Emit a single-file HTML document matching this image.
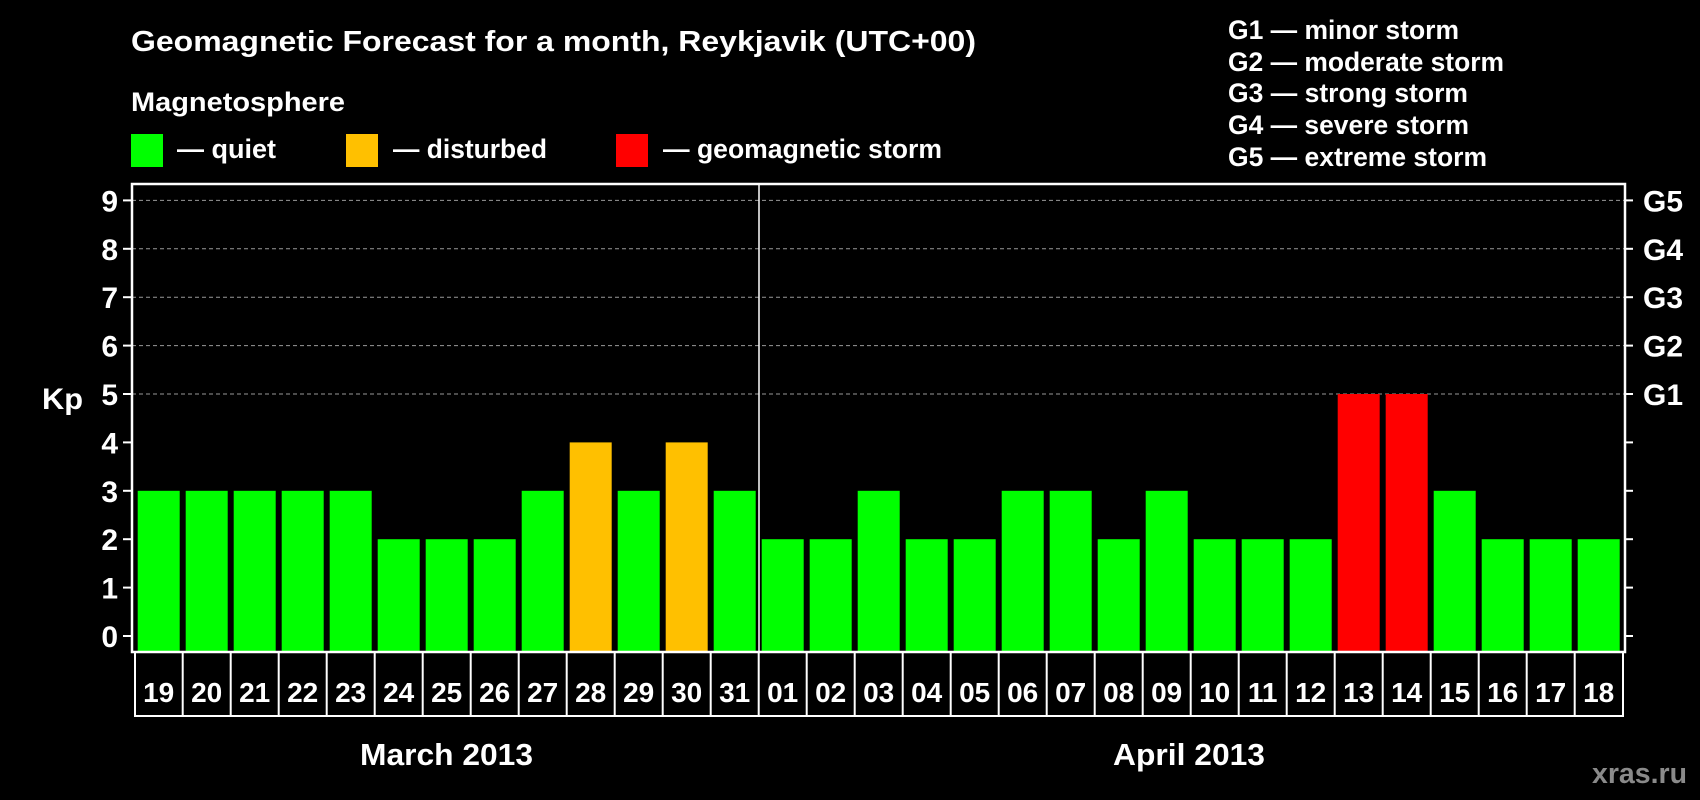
<!DOCTYPE html>
<html><head><meta charset="utf-8"><style>
html,body{margin:0;padding:0;background:#000;}
svg{display:block;font-family:"Liberation Sans",Arial,sans-serif;font-weight:bold;}
</style></head><body>
<svg width="1700" height="800" xmlns="http://www.w3.org/2000/svg">
<rect width="1700" height="800" fill="#000"/>
<g fill="#fff">
<text x="131" y="51" font-size="29" textLength="845" lengthAdjust="spacingAndGlyphs">Geomagnetic Forecast for a month, Reykjavik (UTC+00)</text>
<text x="131" y="111" font-size="27" textLength="214" lengthAdjust="spacingAndGlyphs">Magnetosphere</text>
<text x="177" y="158" font-size="27" textLength="99" lengthAdjust="spacingAndGlyphs">— quiet</text>
<text x="393" y="158" font-size="27" textLength="154" lengthAdjust="spacingAndGlyphs">— disturbed</text>
<text x="663" y="158" font-size="27" textLength="279" lengthAdjust="spacingAndGlyphs">— geomagnetic storm</text>
<text x="1228" y="39" font-size="27" textLength="231" lengthAdjust="spacingAndGlyphs">G1 — minor storm</text>
<text x="1228" y="71" font-size="27" textLength="276" lengthAdjust="spacingAndGlyphs">G2 — moderate storm</text>
<text x="1228" y="102" font-size="27" textLength="240" lengthAdjust="spacingAndGlyphs">G3 — strong storm</text>
<text x="1228" y="134" font-size="27" textLength="241" lengthAdjust="spacingAndGlyphs">G4 — severe storm</text>
<text x="1228" y="166" font-size="27" textLength="259" lengthAdjust="spacingAndGlyphs">G5 — extreme storm</text>
<text x="42" y="409" font-size="30" textLength="41" lengthAdjust="spacingAndGlyphs">Kp</text>
<text x="360" y="765" font-size="31" textLength="173" lengthAdjust="spacingAndGlyphs">March 2013</text>
<text x="1113" y="765" font-size="31" textLength="152" lengthAdjust="spacingAndGlyphs">April 2013</text>
</g>
<text x="1592" y="783" font-size="29" fill="#8a8a8a" textLength="95" lengthAdjust="spacingAndGlyphs">xras.ru</text>
<rect x="131" y="134" width="32" height="33" fill="#00ff00"/>
<rect x="346" y="134" width="32" height="33" fill="#ffc000"/>
<rect x="616" y="134" width="32" height="33" fill="#ff0000"/>
<g id="plot"></g>
</svg>
<script>
var s='http://www.w3.org/2000/svg',p=document.getElementById('plot');
function el(t,a,txt){var e=document.createElementNS(s,t);for(var k in a)e.setAttribute(k,a[k]);if(txt!=null)e.textContent=txt;p.appendChild(e);return e;}
var y0=636,u=48.4;
for(var i=5;i<=9;i++){var y=y0-i*u;el('line',{x1:132,x2:1624,y1:y,y2:y,stroke:'#999','stroke-width':1,'stroke-dasharray':'4,3'});}
for(var i=0;i<=9;i++){var y=y0-i*u;el('line',{x1:123,x2:131,y1:y,y2:y,stroke:'#fff','stroke-width':2});el('line',{x1:1625,x2:1633,y1:y,y2:y,stroke:'#fff','stroke-width':2});
el('text',{x:118,y:y+11,'font-size':30,fill:'#fff','text-anchor':'end'},''+i);
if(i>=5)el('text',{x:1643,y:y+11,'font-size':30,fill:'#fff'},'G'+(i-4));}
var v=[3,3,3,3,3,2,2,2,3,4,3,4,3,2,2,3,2,2,3,3,2,3,2,2,2,5,5,3,2,2,2];
var d=['19','20','21','22','23','24','25','26','27','28','29','30','31','01','02','03','04','05','06','07','08','09','10','11','12','13','14','15','16','17','18'];
for(var i=0;i<31;i++){var x=137.7+i*48,c=v[i]==5?'#ff0000':v[i]==4?'#ffc000':'#00ff00';
el('rect',{x:x,y:y0-v[i]*u,width:42,height:652-(y0-v[i]*u),fill:c});
el('text',{x:x+21,y:702,'font-size':28,fill:'#fff','text-anchor':'middle'},d[i]);
if(i>0)el('line',{x1:x-3,x2:x-3,y1:652,y2:716,stroke:'#fff','stroke-width':2});}
el('line',{x1:135,x2:135,y1:652,y2:716,stroke:'#fff','stroke-width':2});
el('line',{x1:1623,x2:1623,y1:652,y2:716,stroke:'#fff','stroke-width':2});
el('line',{x1:134,x2:1624,y1:716,y2:716,stroke:'#fff','stroke-width':2});
el('line',{x1:759,x2:759,y1:184,y2:652,stroke:'#fff','stroke-width':1.5});
el('rect',{x:132,y:184,width:1493,height:468,fill:'none',stroke:'#fff','stroke-width':2.5});
</script>
</body></html>
